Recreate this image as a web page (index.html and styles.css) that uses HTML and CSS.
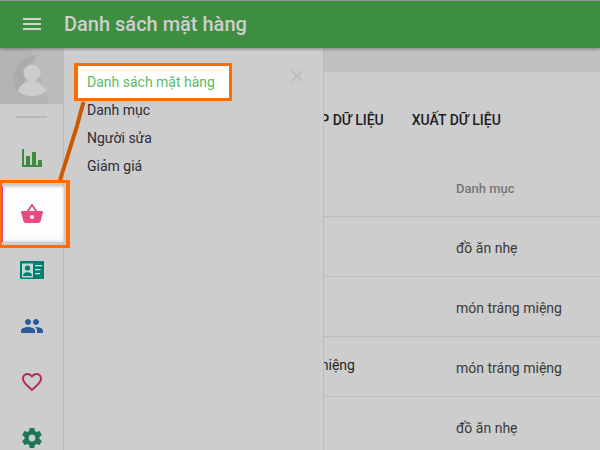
FILE: index.html
```html
<!DOCTYPE html>
<html lang="vi">
<head>
<meta charset="utf-8">
<title>Danh sách mặt hàng</title>
<link rel="stylesheet" href="styles.css">
</head>
<body>
<div class="app">
  <header class="topbar">
    <svg class="menu-icon" viewBox="0 0 18 12"><path d="M0 0h18v2H0zM0 5h18v2H0zM0 10h18v2H0z"/></svg>
    <h1 class="title">Danh sách mặt hàng</h1>
  </header>
  <div class="body">
    <aside class="sidebar">
      <div class="avatar">
        <svg viewBox="0 0 63 56" width="63" height="56">
          <rect width="63" height="56" fill="#b4b4b4"/>
          <path d="M30 0 L63 0 L63 56 L49 56 C44 40 38 20 30 0Z" fill="#bbbbbb"/>
          <path d="M33 7 A24 24 0 0 0 18 44 L26 42 A30 30 0 0 1 36 10 Z" fill="#ababab"/>
          <circle cx="32" cy="25" r="8.500" fill="#cdcdcd"/>
          <path d="M18 43 C20 36 27 33 32 33 C37 33 44 36 46 43 C42 47 37 48 32 48 C27 48 22 47 18 43Z" fill="#cdcdcd"/>
        </svg>
      </div>
      <div class="divider"></div>
      <nav class="nav">
        <div class="nav-item">
          <svg class="icon-chart" viewBox="0 0 20 18" width="20" height="18"><path fill="#3d8c40" d="M0 0h2v16h2V7h4v9h2V3h4v13h2v-5h4v7H0z"/></svg>
        </div>
        <div class="nav-item nav-active">
          <svg class="icon" viewBox="0 0 24 24"><path fill="#ea4a80" d="M17.21 9l-4.38-6.56c-.19-.28-.51-.42-.83-.42-.32 0-.64.14-.83.43L6.79 9H2c-.55 0-1 .45-1 1 0 .09.01.18.04.27l2.54 9.27c.23.84 1 1.46 1.92 1.46h13c.92 0 1.69-.62 1.93-1.46l2.54-9.27L23 10c0-.55-.45-1-1-1h-4.79zM9 9l3-4.4L15 9H9zm3 8c-1.1 0-2-.9-2-2s.9-2 2-2 2 .9 2 2-.9 2-2 2z"/></svg>
        </div>
        <div class="nav-item">
          <svg class="icon-card" viewBox="0 0 24 18" width="24" height="18">
            <rect width="24" height="18" rx="1" fill="#017f70"/>
            <rect x="2" y="2.500" width="11" height="14" fill="#c3d8d3"/>
            <circle cx="7.500" cy="7" r="2.600" fill="#017f70"/>
            <path d="M3 15c0-3 2.500-3.800 4.500-3.800S12 12 12 15z" fill="#017f70"/>
            <path d="M15 4h7v1.300h-7zM15 8h5.500v1.300H15zM15 12h5v1.300h-5z" fill="#cdeae4"/>
          </svg>
        </div>
        <div class="nav-item">
          <svg class="icon" viewBox="0 0 24 24"><path fill="#2a5a9c" d="M16 11c1.660 0 2.990-1.340 2.990-3S17.660 5 16 5c-1.660 0-3 1.340-3 3s1.340 3 3 3zm-8 0c1.660 0 2.990-1.340 2.990-3S9.660 5 8 5C6.340 5 5 6.340 5 8s1.340 3 3 3zm0 2c-2.330 0-7 1.170-7 3.500V19h14v-2.500c0-2.330-4.670-3.500-7-3.500zm8 0c-.29 0-.62.02-.97.05 1.160.84 1.970 1.970 1.970 3.450V19h6v-2.500c0-2.330-4.670-3.500-7-3.500z"/></svg>
        </div>
        <div class="nav-item">
          <svg class="icon" viewBox="0 0 24 24"><path fill="#b12d5a" d="M16.500 3c-1.740 0-3.410.81-4.500 2.090C10.910 3.810 9.240 3 7.500 3 4.420 3 2 5.420 2 8.500c0 3.780 3.400 6.860 8.550 11.540L12 21.350l1.450-1.320C18.600 15.360 22 12.280 22 8.500 22 5.420 19.580 3 16.500 3zm-4.400 15.550l-.1.1-.1-.1C7.140 14.240 4 11.390 4 8.500 4 6.500 5.500 5 7.500 5c1.540 0 3.040.99 3.570 2.360h1.870C13.460 5.990 14.960 5 16.500 5c2 0 3.500 1.500 3.500 3.500 0 2.890-3.140 5.740-7.900 10.050z"/></svg>
        </div>
        <div class="nav-item">
          <svg class="icon" viewBox="0 0 24 24"><path fill="#1e7558" d="M19.430 12.980c.04-.32.07-.64.07-.98s-.03-.66-.07-.98l2.110-1.650c.19-.15.24-.42.12-.64l-2-3.460c-.12-.22-.39-.3-.61-.22l-2.490 1c-.52-.4-1.080-.73-1.690-.98l-.38-2.650C14.460 2.180 14.250 2 14 2h-4c-.25 0-.46.18-.49.42l-.38 2.650c-.61.25-1.170.59-1.690.98l-2.490-1c-.23-.09-.49 0-.61.22l-2 3.460c-.13.22-.07.49.12.64l2.110 1.650c-.04.32-.07.65-.07.98s.03.66.07.98l-2.110 1.650c-.19.15-.24.42-.12.64l2 3.460c.12.22.39.3.61.22l2.490-1c.52.4 1.080.73 1.690.98l.38 2.650c.03.24.24.42.49.42h4c.25 0 .46-.18.49-.42l.38-2.650c.61-.25 1.170-.59 1.690-.98l2.490 1c.23.09.49 0 .61-.22l2-3.460c.12-.22.07-.49-.12-.64l-2.110-1.650zM12 15.500c-1.930 0-3.500-1.570-3.500-3.500s1.570-3.500 3.500-3.500 3.500 1.570 3.500 3.500-1.570 3.500-3.500 3.500z"/></svg>
        </div>
      </nav>
    </aside>
    <main class="main">
      <div class="band"></div>
      <div class="toolbar">
        <span class="action">NHẬP DỮ LIỆU</span>
        <span class="action">XUẤT DỮ LIỆU</span>
      </div>
      <div class="row row-head"><span class="col-name">Tên</span><span class="col-cat">Danh mục</span></div>
      <div class="row"><span class="col-name">Bánh quy</span><span class="col-cat">đồ ăn nhẹ</span></div>
      <div class="row"><span class="col-name">Bánh ngọt</span><span class="col-cat">món tráng miệng</span></div>
      <div class="row"><span class="col-name">món tráng miệng</span><span class="col-cat">món tráng miệng</span></div>
      <div class="row"><span class="col-name">Khoai tây</span><span class="col-cat">đồ ăn nhẹ</span></div>
    </main>
    <section class="drawer">
      <svg class="close" viewBox="0 0 12 12"><path d="M1 1l10 10M11 1L1 11"/></svg>
      <ul class="menu">
        <li class="menu-item menu-active">Danh sách mặt hàng</li>
        <li class="menu-item">Danh mục</li>
        <li class="menu-item">Người sửa</li>
        <li class="menu-item">Giảm giá</li>
      </ul>
    </section>
    <svg class="connector" viewBox="0 0 40 90" width="40" height="90"><path d="M29.500 11 C27 20 25 27 23 35 L6 89"/></svg>
  </div>
</div>
</body>
</html>
```
FILE: styles.css
```css
*, *::before, *::after { box-sizing: border-box; }
html, body { margin: 0; height: 100%; overflow: hidden; }
body { font-family: Roboto, "Noto Sans", sans-serif; background: #cdcdcd; }
.app { display: flex; flex-direction: column; height: 450px; border-top: 1px solid #a3a3a3; }
.topbar { height: 47px; flex: none; display: flex; align-items: center; gap: 23px; padding: 0 0 1px 23px; background: #3d8e41; position: relative; z-index: 4; box-shadow: 0 1px 3px rgba(0,0,0,.35); }
.menu-icon { width: 18px; height: 12px; fill: #cfd8cf; }
.title { margin: 0; font-size: 20px; font-weight: 500; color: #cfcfcf; }
.body { flex: 1; display: flex; position: relative; min-height: 0; }
.sidebar { width: 64px; flex: none; border-right: 1px solid #b9b9b9; position: relative; z-index: 3; background: #cdcdcd; }
.avatar { height: 56px; line-height: 0; }
.divider { height: 2px; margin: 12px 16px; background: #b9b9b9; }
.nav { display: flex; flex-direction: column; }
.nav-item { height: 56px; display: flex; align-items: center; justify-content: center; position: relative; padding-left: 1px; }
.icon { width: 24px; height: 24px; display: block; }
.icon-chart, .icon-card { display: block; }
.nav-active { background: #fdfdfd; margin-right: -1px; padding-right: 1px; box-shadow: inset 0 3px 3px -2px #d8d8d8, inset 0 -3px 3px -2px #d8d8d8, inset -3px 0 2px -2px #d8d8d8; }
.nav-active::before { content: ""; position: absolute; left: 0; top: 0; bottom: 0; width: 3px; background: #e0407a; }
.nav-active::after { content: ""; position: absolute; left: 0; top: -6px; bottom: -6px; width: 70px; border: solid #ff6d00; border-width: 3px 4px 3px 2px; pointer-events: none; }
.main { flex: 1; min-width: 0; }
.band { height: 24px; background: #c0c0c0; }
.toolbar { height: 92px; display: flex; align-items: center; gap: 28px; padding: 4px 0 0 227px; }
.action { font-size: 14px; font-weight: 500; color: #1d1d1d; white-space: nowrap; }
.row { height: 60px; display: flex; align-items: center; border-bottom: 1px solid #bdbdbd; padding-top: 2px; font-size: 14px; color: #3a3a3a; }
.row-head { height: 53px; padding: 0 0 3px; font-size: 13px; font-weight: 500; color: #757575; }
.col-name { width: 392px; padding: 0 0 5px 185px; color: #262626; white-space: nowrap; }
.col-cat { white-space: nowrap; }
.drawer { position: absolute; left: 64px; top: 0; bottom: 0; width: 260px; border-right: 1px solid #bdbdbd; background: #cdcdcd; z-index: 2; padding: 20px 0 0 23px; }
.close { position: absolute; left: 227px; top: 22px; width: 12px; height: 12px; fill: none; stroke: #bcbcbc; stroke-width: 2; }
.menu { list-style: none; margin: 0; padding: 0; }
.menu-item { height: 28px; line-height: 28px; font-size: 14px; color: #2c2c3a; position: relative; z-index: 1; }
.menu-active { color: #5cbb60; isolation: isolate; }
.menu-active::before { content: ""; position: absolute; z-index: -1; left: -13px; top: -5px; width: 158px; height: 38px; background: #fff; border: solid #ff6d00; border-width: 3px 3px 3px 4px; }
.connector { position: absolute; left: 54px; top: 43px; z-index: 5; fill: none; stroke: #cc5800; stroke-width: 4; }
```
